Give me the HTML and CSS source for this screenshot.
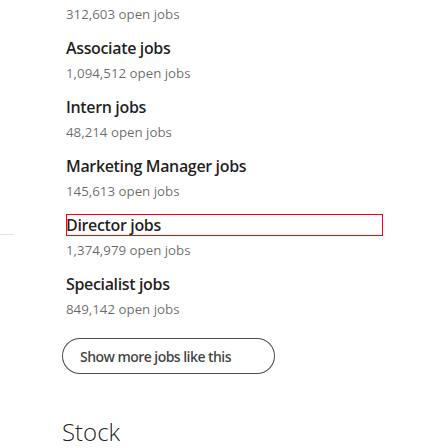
FILE: index.html
```html
<!DOCTYPE html>
<html lang="en">
<head>
<meta charset="utf-8">
<title>Jobs</title>
<link rel="stylesheet" href="styles.css">
</head>
<body>
<div class="layout">
  <aside class="rail"><div class="rail-divider"></div></aside>
  <main class="main">
    <ul class="job-list">
      <li class="job"><a class="job-title">Project Manager jobs</a><p class="job-count">312,603 open jobs</p></li>
      <li class="job"><a class="job-title">Associate jobs</a><p class="job-count">1,094,512 open jobs</p></li>
      <li class="job"><a class="job-title">Intern jobs</a><p class="job-count">48,214 open jobs</p></li>
      <li class="job"><a class="job-title">Marketing Manager jobs</a><p class="job-count">145,613 open jobs</p></li>
      <li class="job"><a class="job-title is-focused">Director jobs</a><p class="job-count">1,374,979 open jobs</p></li>
      <li class="job"><a class="job-title">Specialist jobs</a><p class="job-count">849,142 open jobs</p></li>
    </ul>
    <button class="more-btn" type="button">Show more jobs like this</button>
    <h2 class="section-title">Stock</h2>
  </main>
</div>
</body>
</html>
```

FILE: styles.css
```css
* { box-sizing: border-box; }
html, body { margin: 0; padding: 0; background: #fff; }
body {
  font-family: "Open Sans", "Noto Sans", sans-serif;
  color: rgba(0,0,0,0.9);
  overflow: hidden;
}
.layout {
  display: flex;
  align-items: flex-start;
}
.rail {
  width: 14px;
  flex: none;
  padding-top: 234px;
}
.rail-divider {
  border-top: 1px solid #e6e6e6;
}
.main {
  margin-left: 48px;
  width: 321px;
}
.job-list {
  list-style: none;
  margin: -22px 0 0;
  padding: 0 0 0 4px;
}
.job {
  padding-bottom: 13px;
}
.job-title {
  display: block;
  font-size: 16px;
  font-weight: 600;
  line-height: 22px;
  color: rgba(0,0,0,0.88);
  letter-spacing: -0.35px;
}
.job-title.is-focused {
  outline: 1px solid #ff0000;
  outline-offset: -1px;
}
.job-count {
  margin: 4px 0 0;
  font-size: 13.3px;
  line-height: 20px;
  color: rgba(0,0,0,0.6);
}
.more-btn {
  display: block;
  margin-top: 6px;
  width: 213px;
  height: 36px;
  padding: 0 0 0 17px;
  text-align: left;
  border: 1px solid rgba(0,0,0,0.7);
  border-radius: 18px;
  background: #fff;
  font-family: inherit;
  font-size: 14px;
  font-weight: 600;
  color: rgba(0,0,0,0.75);
  letter-spacing: -0.55px;
}
.section-title {
  margin: 42px 0 0;
  font-size: 24px;
  font-weight: 300;
  line-height: 32px;
  color: rgba(0,0,0,0.9);
}
```
